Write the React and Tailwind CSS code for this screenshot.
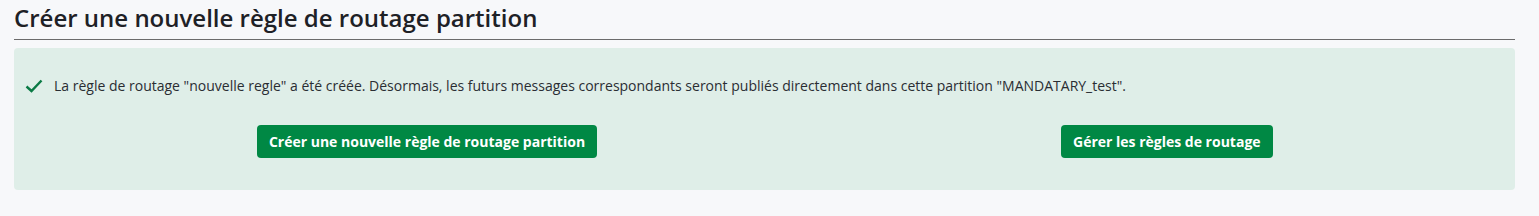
import React from "react";

export default function App() {
  return (
    <div className="min-h-[216px] bg-[#f7f8fa] px-[14px] pt-[1px] text-[#212529]" style={{ fontFamily: '"Open Sans", sans-serif' }}>
      <h1 className="pb-[4px] text-[24px] leading-[34px] font-semibold text-[#1e2126] border-b border-[#6b6b6b] w-[1501px]">
        Créer une nouvelle règle de routage partition
      </h1>
      <div className="mt-[8px] w-[1501px] h-[142px] rounded-[4px] bg-[#dfeee8] pt-[28px]">
        <div className="flex items-center pl-[11px]">
          <svg width="18" height="14" viewBox="0 0 18 14" className="mr-[11px]">
            <path d="M1.5 7.5 L6.5 12 L16.5 1.5" fill="none" stroke="#0a7a45" strokeWidth="2.4" />
          </svg>
          <span className="text-[14px] leading-[20px] text-[#2a2d33]">
            La règle de routage "nouvelle regle" a été créée. Désormais, les futurs messages correspondants seront publiés directement dans cette partition "MANDATARY_test".
          </span>
        </div>
        <div className="flex mt-[29px]">
          <div className="w-[750px] flex justify-center pl-[76px]">
            <button className="h-[33px] px-[12px] rounded-[4px] bg-[#008844] text-white text-[14px] font-bold">
              Créer une nouvelle règle de routage partition
            </button>
          </div>
          <div className="flex-1 flex pl-[297px]">
            <button className="h-[33px] px-[12px] rounded-[4px] bg-[#008844] text-white text-[14px] font-bold">
              Gérer les règles de routage
            </button>
          </div>
        </div>
      </div>
    </div>
  );
}
